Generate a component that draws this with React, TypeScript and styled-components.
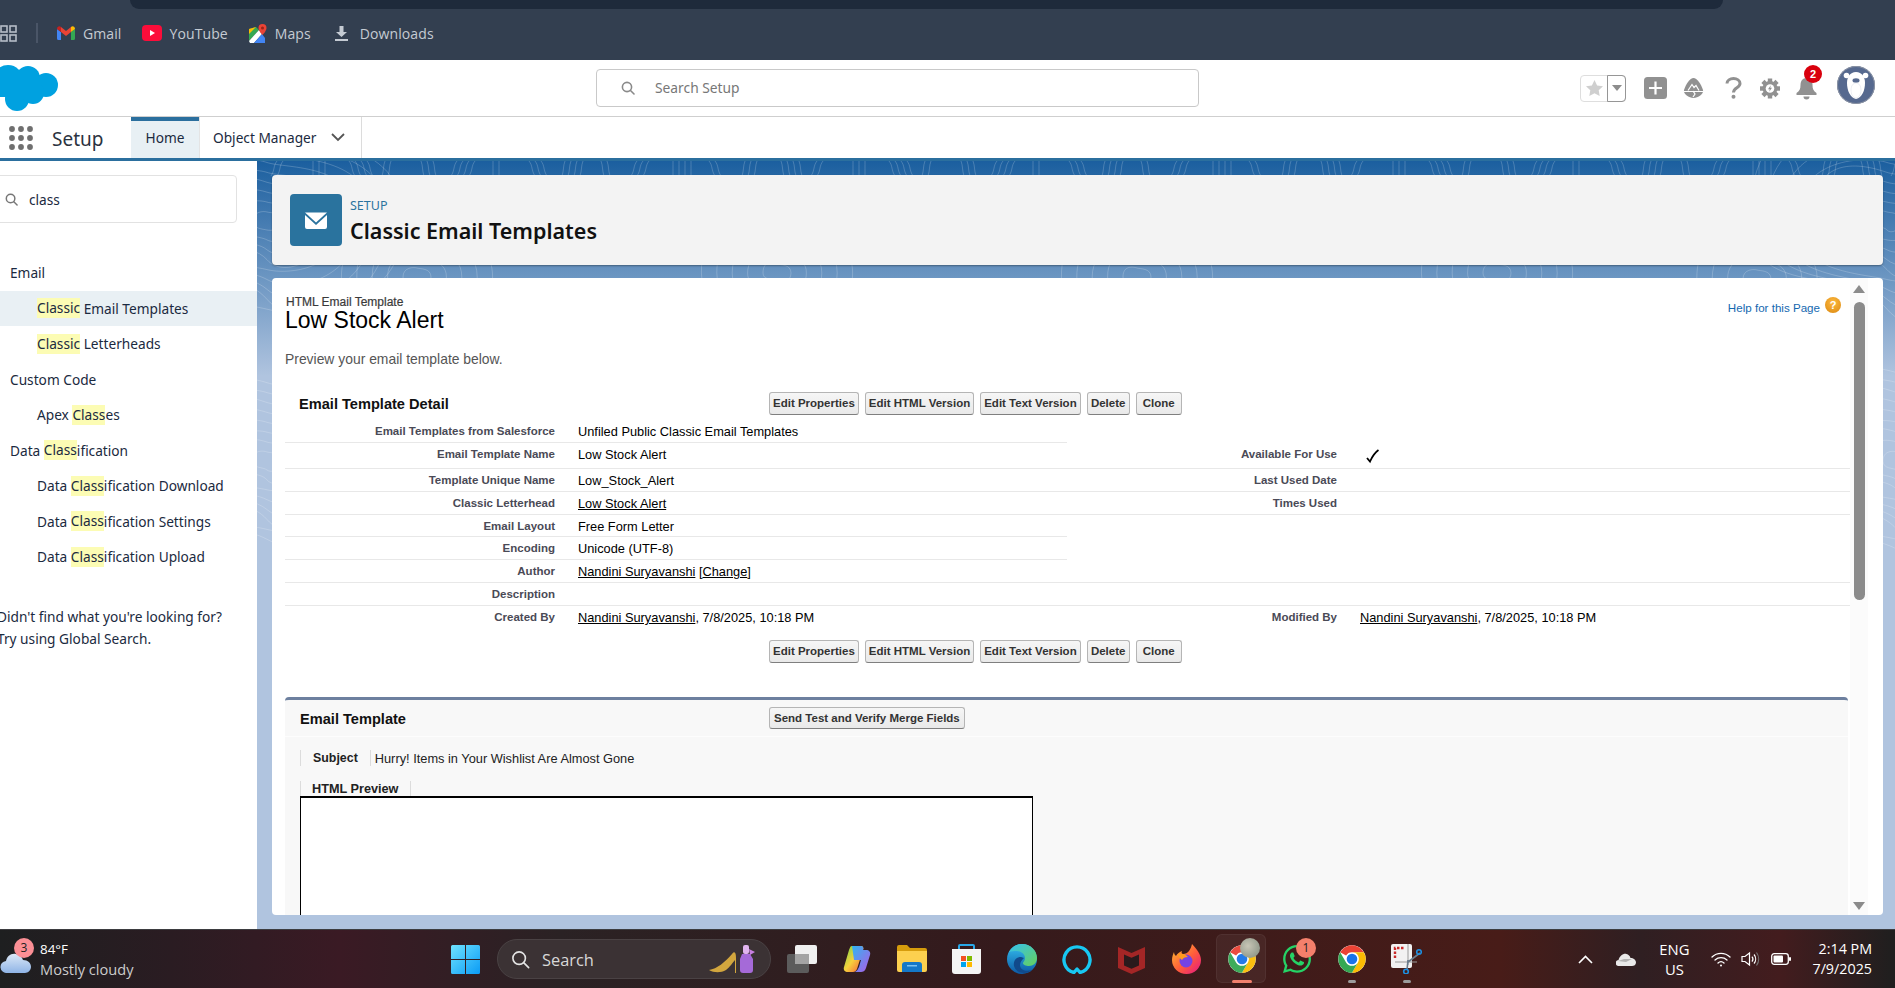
import React from "react";
import styled, { createGlobalStyle } from "styled-components";
import { FaWhatsapp } from "react-icons/fa";

const Global = createGlobalStyle`
  html, body { margin: 0; padding: 0; overflow: hidden; background: #fff; }
  * { box-sizing: border-box; }
`;

const UI = `"Noto Sans", "Open Sans", sans-serif`;
const WIN = `"Open Sans", "Noto Sans", sans-serif`;
const CLASSIC = `"Liberation Sans", Arial, sans-serif`;

const Page = styled.div`
  width: 1895px;
  height: 988px;
  display: flex;
  flex-direction: column;
  overflow: hidden;
  font-family: ${UI};
`;

/* browser bookmarks */
const BrowserBar = styled.div`
  height: 60px;
  flex: none;
  background: #333f50;
`;
const AddressSliver = styled.div`
  height: 9px;
  margin: 0 172px 0 130px;
  background: #1e2a3b;
  border-radius: 0 0 14px 14px;
`;
const BookmarkRow = styled.div`
  display: flex;
  align-items: center;
  height: 50px;
  padding-bottom: 2px;
`;
const Divider = styled.span`
  width: 2px;
  height: 20px;
  margin: 0 19px 0 19px;
  background: #4a5567;
`;
const Bookmark = styled.div<{ $gap: number; $ml: number }>`
  display: flex;
  align-items: center;
  gap: ${(p) => p.$gap}px;
  margin-left: ${(p) => p.$ml}px;
  color: #c5cbd3;
  font-family: ${WIN};
  font-size: 14px;
  letter-spacing: 0.1px;
`;

/* salesforce header */
const GlobalHeader = styled.header`
  height: 57px;
  flex: none;
  display: flex;
  align-items: center;
  background: #fff;
  border-bottom: 1px solid #cfcfcf;
`;
const Logo = styled.svg`
  width: 58px;
  height: 46px;
  flex: none;
  margin-top: -1px;
`;
const GlobalSearch = styled.div`
  width: 603px;
  height: 38px;
  margin-left: 538px;
  margin-top: -1px;
  flex: none;
  display: flex;
  align-items: center;
  gap: 20px;
  padding-left: 24px;
  border: 1px solid #c9c9c9;
  border-radius: 4px;
  color: #777;
  font-size: 13.8px;
`;
const Actions = styled.div`
  display: flex;
  align-items: center;
  margin-left: 381px;
`;
const StarGroup = styled.div`
  width: 46px;
  height: 27px;
  display: flex;
  border: 1px solid #dedede;
  border-radius: 4px;
`;
const StarCell = styled.div`
  width: 26px;
  display: flex;
  align-items: center;
  justify-content: center;
`;
const CaretCell = styled.div`
  flex: 1;
  margin: -1px -1px -1px 0;
  display: flex;
  align-items: center;
  justify-content: center;
  border: 1px solid #969696;
  border-radius: 0 4px 4px 0;
`;
const ActionSlot = styled.div<{ $ml: number; $w: number }>`
  position: relative;
  width: ${(p) => p.$w}px;
  margin-left: ${(p) => p.$ml}px;
  display: flex;
  align-items: center;
  justify-content: center;
`;
const Badge = styled.span`
  position: absolute;
  top: -12px;
  right: -5px;
  width: 18px;
  height: 18px;
  border-radius: 50%;
  background: #d9000d;
  color: #fff;
  font: bold 11px/18px ${CLASSIC};
  text-align: center;
`;
const AvatarWrap = styled.div`
  margin-left: 20px;
  margin-top: -6px;
  width: 38px;
  height: 38px;
`;

/* app nav */
const NavBar = styled.nav`
  height: 44px;
  flex: none;
  display: flex;
  background: #fff;
  border-bottom: 3px solid #2b6f9e;
`;
const AppLauncher = styled.div`
  width: 131px;
  flex: none;
  display: flex;
  align-items: center;
  padding-left: 9px;
  gap: 19px;
`;
const AppName = styled.span`
  font-size: 19px;
  color: #2b3340;
  margin-top: 2px;
`;
const HomeTab = styled.div`
  width: 68px;
  display: flex;
  align-items: center;
  justify-content: center;
  background: #e8f0f4;
  border-top: 4px solid #2b6f9e;
  font-size: 13.7px;
  color: #1b2a40;
  padding-bottom: 4px;
`;
const ObjectTab = styled.div`
  width: 163px;
  display: flex;
  align-items: center;
  gap: 15px;
  padding: 0 0 1px 13px;
  font-size: 13.7px;
  color: #1b2a40;
  border-right: 1px solid #dcdcdc;
  border-left: 1px solid #e4e4e4;
`;

/* body */
const Body = styled.div`
  flex: 1;
  display: flex;
  min-height: 0;
`;
const Sidebar = styled.aside`
  width: 257px;
  flex: none;
  background: #fff;
  overflow: hidden;
  font-size: 13.7px;
  color: #1b2a40;
`;
const SideSearch = styled.div`
  margin: 14px 20px 0 -10px;
  height: 48px;
  display: flex;
  align-items: center;
  gap: 11px;
  padding-left: 14px;
  border: 1px solid #e2e2e2;
  border-radius: 4px;
`;
const SideList = styled.div`
  margin-top: 32px;
`;
const SideRow = styled.div<{ $child?: boolean; $active?: boolean }>`
  height: 35.5px;
  display: flex;
  align-items: center;
  padding-left: ${(p) => (p.$child ? 37 : 10)}px;
  background: ${(p) => (p.$active ? "#e9f0f4" : "transparent")};
  white-space: pre;
`;
const Hit = styled.span`
  display: inline-block;
  background: #fcfcb4;
  line-height: 20px;
`;
const SideHint = styled.p`
  margin: 31px 0 0 -3px;
  line-height: 22px;
  white-space: nowrap;
`;

const Workspace = styled.main`
  position: relative;
  flex: 1;
  min-width: 0;
  display: flex;
  flex-direction: column;
  gap: 13px;
  padding: 14px 12px 14px 15px;
  overflow: hidden;
  background: linear-gradient(#1b5f9f 0, #b0c4df 215px);
`;
const Contours = styled.svg`
  position: absolute;
  inset: 0;
  width: 100%;
  height: 100%;
  pointer-events: none;
`;
const TitleCard = styled.section`
  position: relative;
  height: 90px;
  flex: none;
  display: flex;
  align-items: center;
  gap: 8px;
  padding-left: 18px;
  background: #f3f3f3;
  border-radius: 4px;
  box-shadow: 0 1px 2px rgba(0, 0, 0, 0.35);
`;
const TitleIcon = styled.div`
  width: 52px;
  height: 52px;
  display: flex;
  align-items: center;
  justify-content: center;
  border-radius: 4px;
  background: #2a739e;
`;
const TitleText = styled.div`
  padding-top: 2px;
`;
const Crumb = styled.div`
  font-size: 12.5px;
  line-height: 17px;
  color: #2a739e;
`;
const CardTitle = styled.h1`
  margin: 2px 0 0;
  font-size: 21.5px;
  font-weight: 600;
  line-height: 30px;
  color: #111;
  white-space: nowrap;
`;
const DetailCard = styled.section`
  position: relative;
  flex: 1;
  min-height: 0;
  display: flex;
  background: #fff;
  border-radius: 4px;
  overflow: hidden;
  font-family: ${CLASSIC};
`;
const Content = styled.div`
  flex: 1;
  min-width: 0;
  position: relative;
`;
const PageHead = styled.div`
  padding: 17px 0 0 14px;
`;
const PageKind = styled.div`
  font-size: 12px;
  line-height: 14px;
  color: #3a3a3a;
  -webkit-text-stroke: 0.2px #3a3a3a;
`;
const PageName = styled.h2`
  margin: 0 0 0 -1px;
  font-size: 23px;
  font-weight: normal;
  line-height: 22px;
  color: #000;
`;
const Intro = styled.p`
  margin: 20px 0 0 -1px;
  font-size: 13.9px;
  line-height: 16px;
  color: #555;
`;
const HelpLink = styled.div`
  position: absolute;
  top: 23px;
  right: 9px;
  display: flex;
  align-items: flex-start;
  gap: 5px;
  font-size: 11.6px;
  line-height: 14px;
  color: #1468b0;
`;
const HelpDot = styled.span`
  width: 16px;
  height: 16px;
  margin-top: -4px;
  border-radius: 50%;
  background: radial-gradient(circle at 50% 35%, #fdb93f, #db8810);
  color: #fff;
  font: bold 11px/16px ${CLASSIC};
  text-align: center;
`;
const DetailBar = styled.div<{ $mt: number }>`
  display: flex;
  align-items: flex-start;
  height: 23px;
  margin: ${(p) => p.$mt}px 0 0 13px;
`;
const SectionName = styled.h3<{ $w: number; $pl?: number }>`
  width: ${(p) => p.$w}px;
  flex: none;
  margin: 0;
  padding: 4px 0 0 ${(p) => p.$pl ?? 0}px;
  font-size: 14.6px;
  line-height: 17px;
  font-weight: bold;
  color: #111;
`;
const ButtonRow = styled.div`
  display: flex;
  gap: 6px;
`;
const Btn = styled.button<{ $minW?: number }>`
  height: 23px;
  min-width: ${(p) => p.$minW ?? 0}px;
  padding: 0 3px 1px;
  font: bold 11.5px/19px ${CLASSIC};
  color: #333;
  background: linear-gradient(#f6f6f6, #e9e9e9);
  border: 1px solid #b5b5b5;
  border-bottom-color: #7f7f7f;
  border-radius: 3px;
  white-space: nowrap;
`;
const FieldGrid = styled.div`
  display: grid;
  grid-template-columns: 270px 512px 270px 1fr;
  margin: 5px 0 0 13px;
  font-size: 12.8px;
  line-height: 14px;
`;
const Cell = styled.div<{ $h: number; $line: boolean }>`
  height: ${(p) => p.$h}px;
  border-bottom: ${(p) => (p.$line ? "1px solid #e8e8e8" : "none")};
`;
const LabelCell = styled(Cell)`
  padding-top: 4px;
  text-align: right;
  color: #4a4a56;
  font-size: 11.5px;
  font-weight: bold;
  white-space: nowrap;
`;
const ValueCell = styled(Cell)`
  padding: 5px 0 0 23px;
  color: #000;
  white-space: nowrap;
`;
const RecordLink = styled.span`
  text-decoration: underline;
`;
const CheckMark = styled.svg`
  display: block;
  margin: 1px 0 0 6px;
`;
const TemplateSection = styled.section`
  margin: 34px 2px 0 13px;
  height: 300px;
  border-top: 3px solid #6d809f;
  border-radius: 4px 4px 0 0;
  background: #f8f8f8;
`;
const TemplateHead = styled.div`
  display: flex;
  align-items: flex-start;
  height: 37px;
  padding: 7px 0 0 15px;
  border-bottom: 1px solid #fdfdfd;
`;
const SendBtn = styled(Btn)`
  height: 22px;
  padding: 0 4px 1px;
  line-height: 18px;
`;
const SubjectRow = styled.div`
  display: flex;
  align-items: center;
  height: 14px;
  margin: 14px 0 0 15px;
  font-size: 12.8px;
`;
const SubjectName = styled.strong`
  padding: 0 12px 0 12px;
  font-size: 12.4px;
  border-left: 1px solid #dcdcdc;
  border-right: 1px solid #dcdcdc;
  color: #222;
  line-height: 16px;
`;
const SubjectValue = styled.span`
  padding-left: 4px;
  color: #222;
`;
const PreviewTab = styled.div`
  display: inline-block;
  margin: 16px 0 0 15px;
  padding: 1px 11px 0;
  height: 15px;
  border-left: 1px solid #dcdcdc;
  border-right: 1px solid #dcdcdc;
  font-size: 12.7px;
  line-height: 14px;
  font-weight: bold;
  color: #222;
  vertical-align: top;
`;
const PreviewFrame = styled.div`
  width: 733px;
  height: 200px;
  margin-left: 15px;
  background: #fff;
  border: 1px solid #000;
  border-top-width: 2px;
`;
const ScrollRail = styled.div`
  position: relative;
  width: 18px;
  margin-right: 15px;
  flex: none;
  background: #fbfbfb;
  display: flex;
  flex-direction: column;
  align-items: center;
`;
const ScrollUp = styled.span`
  margin-top: 7px;
  width: 0;
  height: 0;
  border: 6px solid transparent;
  border-top: 0;
  border-bottom: 8px solid #8b8b8b;
`;
const ScrollThumb = styled.span`
  margin-top: 9px;
  width: 11px;
  height: 298px;
  border-radius: 6px;
  background: #8b8b8b;
`;
const ScrollDown = styled.span`
  margin-top: auto;
  margin-bottom: 5px;
  width: 0;
  height: 0;
  border: 6px solid transparent;
  border-bottom: 0;
  border-top: 8px solid #8b8b8b;
`;

/* windows taskbar */
const Taskbar = styled.footer`
  height: 59px;
  flex: none;
  display: flex;
  align-items: stretch;
  font-family: ${WIN};
  color: #fff;
  border-top: 1px solid #3d3d40;
  background: linear-gradient(90deg, #1e1f20 0, #2a1c22 170px, #3a1a24 340px, #2a2224 560px, #351a1c 1000px, #481c18 1500px, #2f1f22 1640px, #431c1e 1780px, #1f1f1f 1895px);
`;
const Weather = styled.div`
  position: relative;
  width: 451px;
  flex: none;
  display: flex;
  align-items: center;
  gap: 9px;
`;
const WeatherBadge = styled.span`
  position: absolute;
  left: 14px;
  top: 8px;
  width: 20px;
  height: 20px;
  border-radius: 50%;
  background: #fb8f95;
  color: #222;
  font-size: 12px;
  line-height: 20px;
  text-align: center;
`;
const WeatherText = styled.div`
  line-height: 20px;
  font-size: 13.4px;
`;
const WeatherSub = styled.div`
  color: #ccc;
  font-size: 14.6px;
`;
const StartBtn = styled.div`
  width: 46px;
  flex: none;
  display: flex;
  align-items: center;
`;
const SearchPill = styled.div`
  width: 274px;
  height: 40px;
  margin-top: 9px;
  flex: none;
  display: flex;
  align-items: center;
  gap: 12px;
  padding-left: 13px;
  border-radius: 20px;
  background: #3b3234;
  border: 1px solid #4a4244;
  color: #d8d8d8;
  font-size: 16.4px;
`;
const PillArt = styled.svg`
  margin-left: auto;
  margin-right: 13px;
`;
const AppSlots = styled.div`
  display: flex;
  margin-left: 3px;
`;
const AppSlot = styled.div<{ $active?: boolean }>`
  position: relative;
  width: 55px;
  display: flex;
  align-items: center;
  justify-content: center;
  padding-bottom: 1px;
  &::before {
    content: "";
    display: ${(p) => (p.$active ? "block" : "none")};
    position: absolute;
    left: 2px;
    right: 3px;
    top: 4px;
    bottom: 5px;
    border-radius: 6px;
    background: rgba(255, 255, 255, 0.05);
    border: 1px solid rgba(255, 255, 255, 0.05);
  }
`;
const RunDot = styled.span<{ $active?: boolean }>`
  position: absolute;
  left: 50%;
  bottom: 5px;
  width: ${(p) => (p.$active ? 20 : 8)}px;
  height: 3px;
  margin-left: ${(p) => (p.$active ? -10 : -4)}px;
  border-radius: 2px;
  background: ${(p) => (p.$active ? "#f2806e" : "#9c9c9c")};
`;
const AppBadge = styled.span`
  position: absolute;
  left: 27px;
  top: 8px;
  width: 20px;
  height: 20px;
  border-radius: 50%;
  background: #f4806c;
  color: #222;
  font-size: 12px;
  line-height: 20px;
  text-align: center;
`;
const Overlay = styled.span`
  position: absolute;
  left: 26px;
  top: 8px;
  width: 20px;
  height: 20px;
  border-radius: 50%;
  background: radial-gradient(circle at 40% 40%, #c8c6b6, #7f8a7c);
`;
const Tray = styled.div`
  margin-left: auto;
  display: flex;
  align-items: center;
  padding-right: 23px;
`;
const TraySlot = styled.div<{ $ml: number }>`
  margin-left: ${(p) => p.$ml}px;
  display: flex;
  align-items: center;
`;
const TwoLine = styled.div<{ $right?: boolean }>`
  text-align: ${(p) => (p.$right ? "right" : "center")};
  font-size: ${(p) => (p.$right ? 14.3 : 14.8)}px;
  line-height: 20px;
  white-space: nowrap;
`;

/* icons */
const GmailIcon = () => (
  <svg width="18" height="14" viewBox="0 0 18 14">
    <path d="M0 3v9.500A1.500 1.500 0 0 0 1.500 14H4V6z" fill="#4285f4" />
    <path d="M18 3v9.500a1.500 1.500 0 0 1-1.500 1.500H14V6z" fill="#34a853" />
    <path d="M4 6V1L9 5l5-4v5L9 10z" fill="#ea4335" />
    <path d="M0 3c0-2.500 2.600-3.600 4-2v5z" fill="#c5221f" />
    <path d="M18 3c0-2.500-2.600-3.600-4-2v5z" fill="#fbbc04" />
  </svg>
);
const YoutubeIcon = () => (
  <svg width="20" height="16" viewBox="0 0 20 16">
    <rect width="20" height="16" y="0" rx="4" fill="#fc0d3a" />
    <path d="M8 5l5 3-5 3z" fill="#fff" />
  </svg>
);
const MapsIcon = () => (
  <svg width="18" height="19" viewBox="0 0 18 19">
    <path d="M0 5l7-2 3 3-10 11z" fill="#34a853" />
    <path d="M0 17L10 6l3 4-8 9H1z" fill="#fff" />
    <path d="M5 19l8-9 3 4v5z" fill="#4285f4" />
    <path d="M0 5v5l7-7z" fill="#fbbc04" />
    <path d="M13.500 0a4 4 0 0 0-4 4c0 3 4 7 4 7s4-4 4-7a4 4 0 0 0-4-4z" fill="#ea4335" />
    <circle cx="13.500" cy="4" r="1.500" fill="#9d2418" />
  </svg>
);
const DownloadIcon = () => (
  <svg width="13" height="15" viewBox="0 0 13 15">
    <path d="M4.500 0h4v6H12L6.500 11 1 6h3.500z" fill="#c5cbd3" />
    <rect y="13" width="13" height="2" fill="#c5cbd3" />
  </svg>
);
const AppsIcon = () => (
  <svg width="17" height="17" viewBox="0 0 17 17" fill="none" stroke="#b6bdc7" strokeWidth="1.600">
    <rect x="1" y="1" width="6" height="6" />
    <rect x="10" y="1" width="6" height="6" />
    <rect x="1" y="10" width="6" height="6" />
    <rect x="10" y="10" width="6" height="6" />
  </svg>
);
const SearchGlyph = ({ size, color, width = 1.6 }: { size: number; color: string; width?: number }) => (
  <svg width={size} height={size} viewBox="0 0 14 14" fill="none" stroke={color} strokeWidth={width} strokeLinecap="round">
    <circle cx="6" cy="6" r="4.600" />
    <path d="M9.500 9.500L13 13" />
  </svg>
);
const CloudLogo = () => (
  <Logo viewBox="0 0 58 46">
    <g fill="#00a1e0">
      <circle cx="8" cy="15" r="15" />
      <circle cx="28" cy="13" r="12" />
      <circle cx="46" cy="20" r="12" />
      <circle cx="17" cy="34" r="12" />
      <circle cx="33" cy="28" r="11" />
      <rect x="0" y="10" width="40" height="22" />
    </g>
  </Logo>
);
const Star = () => (
  <svg width="17" height="16" viewBox="0 0 17 16">
    <path d="M8.500 0l2.600 5.400 5.900.8-4.300 4.100 1 5.700-5.200-2.800L3.300 16l1-5.700L0 6.200l5.900-.8z" fill="#cfcfcf" />
  </svg>
);
const Caret = () => (
  <svg width="10" height="6" viewBox="0 0 10 6"><path d="M0 0h10L5 6z" fill="#8d8d8d" /></svg>
);
const PlusIcon = () => (
  <svg width="23" height="22" viewBox="0 0 23 22">
    <rect width="23" height="22" rx="3.500" fill="#919191" />
    <path d="M11.500 4.500v13M5 11h13" stroke="#fff" strokeWidth="2.200" />
  </svg>
);
const TrailIcon = () => (
  <svg width="21" height="21" viewBox="0 0 21 21">
    <path d="M10.500 0C14 0 18 6 20 12c1 4-5 8-9.500 8S0 16 1 12C3 6 7 0 10.500 0z" fill="#919191" />
    <path d="M1 13.500h19M5 12.500l4-6 2 3 2-2 3 5M10 13l2 3-2 3" fill="none" stroke="#fff" strokeWidth="1.200" />
  </svg>
);
const QuestionIcon = () => (
  <svg width="17" height="22" viewBox="0 0 17 22" fill="none">
    <path d="M2 6.500C2 3.500 5 1.500 8.500 1.500s6.500 2 6.500 5c0 4.500-6.500 4-6.500 9" stroke="#919191" strokeWidth="3" />
    <circle cx="8.500" cy="19.800" r="2" fill="#919191" />
  </svg>
);
const GearIcon = () => (
  <svg width="20" height="21" viewBox="0 0 20 20">
    {[0, 45, 90, 135, 180, 225, 270, 315].map((a) => (
      <rect key={a} x="7.800" y="0" width="4.400" height="5" fill="#919191" transform={`rotate(${a} 10 10)`} />
    ))}
    <circle cx="10" cy="10" r="7.500" fill="#919191" />
    <circle cx="10" cy="10" r="4.300" fill="#fff" />
    <path d="M10.800 6.800L8 10.800h1.800l-.6 2.400 2.800-4h-1.800z" fill="#919191" />
  </svg>
);
const BellIcon = () => (
  <svg width="21" height="23" viewBox="0 0 21 23">
    <path d="M10.500 1c-4 0-6 3-6 7 0 4-1 6-4 8v2h20v-2c-3-2-4-4-4-8 0-4-2-7-6-7z" fill="#919191" />
    <path d="M7.500 19.500h6a3 3 0 0 1-6 0z" fill="#919191" />
  </svg>
);
const BearAvatar = () => (
  <svg width="38" height="38" viewBox="0 0 38 38">
    <circle cx="19" cy="19" r="19" fill="#56698f" />
    <circle cx="19" cy="19" r="18.500" fill="none" stroke="#8d94a3" strokeWidth="1" />
    <circle cx="9.500" cy="9.500" r="2.800" fill="#fff" />
    <circle cx="28.500" cy="9.500" r="2.800" fill="#fff" />
    <path d="M19 6c-6 0-9 5-9 11 0 7 3 15 9 16 6-1 9-9 9-16 0-6-3-11-9-11z" fill="#fff" />
    <ellipse cx="19" cy="14.500" rx="3.500" ry="2.200" fill="#56698f" />
    <path d="M19 17c-3 0-5 3-5 7 0 4 2 8 5 8s5-4 5-8c0-4-2-7-5-7z" fill="#fff" stroke="#d8dde6" strokeWidth=".5" />
  </svg>
);
const Waffle = () => (
  <svg width="24" height="24" viewBox="0 0 24 24" fill="#6f6f6f">
    {[3, 12, 21].flatMap((y) => [3, 12, 21].map((x) => <circle key={`${x}-${y}`} cx={x} cy={y} r="2.900" />))}
  </svg>
);
const Chevron = () => (
  <svg width="14" height="9" viewBox="0 0 14 9" fill="none" stroke="#555" strokeWidth="1.800"><path d="M1 1l6 6 6-6" /></svg>
);
const Envelope = () => (
  <svg width="22" height="17" viewBox="0 0 22 17">
    <path d="M0 0h22L11 10z" fill="#fff" transform="translate(0 .5)" />
    <path d="M0 3l11 10L22 3v12a2 2 0 0 1-2 2H2a2 2 0 0 1-2-2z" fill="#fff" />
  </svg>
);
const ContourArt = () => {
  const blobs = [
    [10, 60, 9], [1630, 60, 9], [10, 300, 8], [1640, 300, 9],
    [160, 116, 5], [520, 112, 5], [880, 116, 5], [1240, 112, 5], [1500, 118, 4],
  ];
  const bundles = Array.from({ length: 46 }, (_, i) => {
    const x = 20 + i * 36;
    const lean = ((i * 7) % 5) - 2;
    const count = 2 + (i % 3);
    return Array.from({ length: count }, (_, j) => {
      const px = x + j * 6;
      return `M${px} 0C${px + lean * 2} 5 ${px + lean} 9 ${px + lean * 3} 15`;
    });
  }).flat();
  return (
    <Contours aria-hidden="true">
      <g fill="none" stroke="#fff" strokeOpacity=".2" strokeWidth="1">
        {bundles.map((d) => <path key={d} d={d} />)}
        {blobs.flatMap(([cx, cy, n], b) =>
          Array.from({ length: n }, (_, i) => {
            const r = 10 + i * 11;
            const k = 1 + ((b * 3 + i) % 4) * 0.12;
            return (
              <path
                key={`${b}-${i}`}
                d={`M${cx - r * 1.4} ${cy} C${cx - r * 1.4} ${cy - r * k} ${cx - r * 0.3} ${cy - r} ${cx} ${cy - r * 0.9}
                S${cx + r * 1.4} ${cy - r * 0.9} ${cx + r * 1.4} ${cy} S${cx + r * 0.4} ${cy + r * k} ${cx} ${cy + r * 0.9}
                S${cx - r * 1.4} ${cy + r * 0.8} ${cx - r * 1.4} ${cy}`}
              />
            );
          })
        )}
      </g>
    </Contours>
  );
};
const WeatherCloud = () => (
  <svg width="31" height="20" viewBox="0 0 31 20" style={{ flex: "none", marginTop: 8 }}>
    <defs>
      <linearGradient id="wc" x1="0" y1="0" x2="0" y2="1">
        <stop offset="0" stopColor="#dbe8f7" />
        <stop offset="1" stopColor="#8fb4e6" />
      </linearGradient>
    </defs>
    <path d="M7 20a6 6 0 0 1-1-12c1-5 5-8 10-7 4 1 6 3 7 6 5 0 8 3 8 7 0 3-3 6-6 6z" fill="url(#wc)" />
  </svg>
);
const WinLogo = () => (
  <svg width="29" height="29" viewBox="0 0 29 29">
    <defs>
      <linearGradient id="wl" x1="0" y1="0" x2="1" y2="1">
        <stop offset="0" stopColor="#6fe3ff" />
        <stop offset="1" stopColor="#0a9bf5" />
      </linearGradient>
    </defs>
    <path d="M0 1.500A1.500 1.500 0 0 1 1.500 0H14v14H0zM15 0h12.500A1.500 1.500 0 0 1 29 1.500V14H15zM0 15h14v14H1.500A1.500 1.500 0 0 1 0 27.500zM15 15h14v12.500a1.500 1.500 0 0 1-1.500 1.500H15z" fill="url(#wl)" />
  </svg>
);
const HeelArt = () => (
  <PillArt width="48" height="30" viewBox="0 0 48 30">
    <path d="M0 26c8-1 16-8 23-16 3-4 4 0 4 4v15h-1V16c-2 2-5 7-9 10-5 3-12 3-17 0z" fill="#d2a63e" />
    <path d="M33 10h8l3 5v11c0 2-1 3-3 3h-7c-2 0-3-1-3-3V15z" fill="#a56ad8" />
    <rect x="34" y="1" width="6" height="9" rx="2" fill="#e0b4ee" />
    <path d="M40 5l6 3-5 3z" fill="#c77fe0" />
  </PillArt>
);
const TaskView = () => (
  <svg width="30" height="28" viewBox="0 0 30 28">
    <rect x="0" y="9" width="22" height="19" rx="2" fill="#5c5c5c" />
    <rect x="8" y="0" width="22" height="19" rx="2" fill="#f0f0f0" />
    <rect x="8" y="9" width="14" height="10" fill="#a4a4a4" />
  </svg>
);
const Copilot = () => (
  <svg width="28" height="26" viewBox="0 0 28 26">
    <defs>
      <linearGradient id="cp1" x1="0" y1="0" x2="1" y2="1">
        <stop offset="0" stopColor="#2fb6f0" />
        <stop offset="1" stopColor="#b05ae8" />
      </linearGradient>
      <linearGradient id="cp2" x1="0" y1="0" x2="1" y2="1">
        <stop offset="0" stopColor="#6fd34a" />
        <stop offset=".5" stopColor="#f6d13c" />
        <stop offset="1" stopColor="#f4563a" />
      </linearGradient>
    </defs>
    <path d="M9 0h9c2 0 3 2 2 4l-6 19c-1 2-2 3-4 3H5C2 26 0 24 1 21L6 4c1-2 1-4 3-4z" fill="url(#cp2)" />
    <path d="M9 0h9c2 0 3 2 2 4h3c3 0 5 2 4 5l-4 13c-1 3-3 4-5 4h-6c2-1 3-3 4-5l2-7H11z" fill="url(#cp1)" />
  </svg>
);
const Folder = () => (
  <svg width="30" height="27" viewBox="0 0 30 27">
    <path d="M0 2a2 2 0 0 1 2-2h8l3 3h15a2 2 0 0 1 2 2v5H0z" fill="#d69c0c" />
    <path d="M0 6h30v19a2 2 0 0 1-2 2H2a2 2 0 0 1-2-2z" fill="#fcd04f" />
    <path d="M5 27v-7a3 3 0 0 1 3-3h14a3 3 0 0 1 3 3v7z" fill="#1478c8" />
    <rect x="10" y="20" width="10" height="1.500" fill="#79c1f2" />
  </svg>
);
const StoreIcon = () => (
  <svg width="29" height="30" viewBox="0 0 29 30">
    <path d="M7 6V2a1 1 0 0 1 1-1h13a1 1 0 0 1 1 1v4" fill="none" stroke="#29a8e8" strokeWidth="2" />
    <path d="M0 5h29v22a3 3 0 0 1-3 3H3a3 3 0 0 1-3-3z" fill="#f4f4f4" />
    <rect x="9" y="12" width="5" height="5" fill="#f25022" />
    <rect x="15" y="12" width="5" height="5" fill="#7fba00" />
    <rect x="9" y="18" width="5" height="5" fill="#00a4ef" />
    <rect x="15" y="18" width="5" height="5" fill="#ffb900" />
  </svg>
);
const EdgeIcon = () => (
  <svg width="30" height="30" viewBox="0 0 30 30">
    <defs>
      <linearGradient id="ed1" x1="0" y1="0" x2="0" y2="1">
        <stop offset="0" stopColor="#35c1f1" />
        <stop offset="1" stopColor="#0c59a4" />
      </linearGradient>
      <linearGradient id="ed2" x1="0" y1="0" x2="1" y2="1">
        <stop offset="0" stopColor="#35c1f1" />
        <stop offset="1" stopColor="#66d05a" />
      </linearGradient>
    </defs>
    <circle cx="15" cy="15" r="15" fill="url(#ed1)" />
    <path d="M2 8C5 2 10 0 15 0c9 0 15 7 15 14 0 5-4 8-8 8-3 0-6-1-6-3 0-1 2-2 2-5 0-4-4-7-8-7-3 0-6 0-8 1z" fill="url(#ed2)" />
    <path d="M14 13c-5 0-8 4-7 9 1 4 5 7 10 7 3 0 6-1 8-3-6 2-12 0-12-5 0-3 2-5 4-7z" fill="#114a8b" />
  </svg>
);
const AlexaIcon = () => (
  <svg width="30" height="30" viewBox="0 0 30 30">
    <path d="M12 28.500A13 13 0 1 1 18 28.500L15 25z" fill="none" stroke="#18c8f2" strokeWidth="3.400" strokeLinejoin="round" />
  </svg>
);
const McAfeeIcon = () => (
  <svg width="27" height="30" viewBox="0 0 27 30">
    <path d="M0 3l13.500 6L27 3v21l-13.500 6L0 24z" fill="#a42626" />
    <path d="M6 10.500l7.500 3.300 7.500-3.300v11l-7.500 3.300L6 21.500z" fill="#2a1a1c" />
  </svg>
);
const FirefoxIcon = () => (
  <svg width="29" height="30" viewBox="0 0 29 30">
    <defs>
      <linearGradient id="ff" x1="0" y1="0" x2="1" y2="1">
        <stop offset="0" stopColor="#ffc22e" />
        <stop offset=".55" stopColor="#ff5a3c" />
        <stop offset="1" stopColor="#e31587" />
      </linearGradient>
    </defs>
    <path d="M20 0c5 5 9 11 9 16a14.500 14 0 0 1-29 0c0-3 1-6 2-8 0 2 1 3 2 4 1-2 3-4 6-5-1 2 0 3 1 3 5 0 8-5 9-10z" fill="url(#ff)" />
    <circle cx="14" cy="17" r="6.500" fill="#7543e3" />
    <path d="M6 10c4-1 8 0 10 3-3 0-5 1-6 3-2-2-4-3-4-6z" fill="#ff9a1f" />
  </svg>
);
const ChromeIcon = () => (
  <svg width="30" height="30" viewBox="0 0 48 48">
    <circle cx="24" cy="24" r="22" fill="#fff" />
    <path d="M5.050 13A22 22 0 0 1 42.950 13H24A11 11 0 0 0 14.500 18.500z" fill="#ea4335" />
    <path d="M42.950 13A22 22 0 0 1 24 46L33.500 29.500A11 11 0 0 0 24 13z" fill="#fbbc04" />
    <path d="M5.050 13L14.500 29.500A11 11 0 0 0 33.500 29.500L24 46A22 22 0 0 1 5.050 13z" fill="#34a853" />
    <circle cx="24" cy="24" r="8.500" fill="#1a73e8" />
  </svg>
);
const SnipIcon = () => (
  <svg width="31" height="30" viewBox="0 0 31 30">
    <rect x="0" y="0" width="21" height="24" rx="2" fill="#f2f2f2" />
    <path d="M4 14V4h10" fill="none" stroke="#c92a2a" strokeWidth="2.400" strokeDasharray="2.500 1.500" />
    <path d="M17 0v21M4 18h22" stroke="#9a9a9a" strokeWidth="1" />
    <path d="M17 18l12-9M17 16l-1 10" stroke="#6a7c8c" strokeWidth="1.600" />
    <circle cx="28" cy="8" r="2.300" fill="none" stroke="#1d8fe0" strokeWidth="1.600" />
    <circle cx="15" cy="27.500" r="2.300" fill="none" stroke="#1d8fe0" strokeWidth="1.600" />
  </svg>
);
const UpChevron = () => (
  <svg width="15" height="9" viewBox="0 0 15 9" fill="none" stroke="#fff" strokeWidth="1.600"><path d="M1 8l6.500-6.500L14 8" /></svg>
);
const OneDrive = () => (
  <svg width="20" height="13" viewBox="0 0 20 13">
    <path d="M3 13a3 3 0 0 1-.5-6c1-4 5-7 8-6 2 .5 3.500 2 4 4 3 0 5.500 2 5.500 4.500S18 13 16 13z" fill="#e9e9e9" />
    <path d="M2 8l6-2 8 0-6 3z" fill="#b3b3b3" />
  </svg>
);
const Wifi = () => (
  <svg width="20" height="15" viewBox="0 0 20 15" fill="none" stroke="#fff" strokeWidth="1.300" strokeLinecap="round">
    <path d="M1 5a13 13 0 0 1 18 0M4 8a9 9 0 0 1 12 0M7 11a4.500 4.500 0 0 1 6 0" />
    <circle cx="10" cy="13.500" r="1" fill="#fff" stroke="none" />
  </svg>
);
const Speaker = () => (
  <svg width="20" height="16" viewBox="0 0 20 16" fill="none" stroke="#fff" strokeWidth="1.200">
    <path d="M1 5.500h3L8.500 2v12L4 10.500H1z" />
    <path d="M11 5.500a4 4 0 0 1 0 5M13 3.500a7 7 0 0 1 0 9" />
    <path d="M15.500 1.500a11 11 0 0 1 0 13" stroke="#777" />
  </svg>
);
const Battery = () => (
  <svg width="20" height="12" viewBox="0 0 20 12">
    <rect x=".7" y=".7" width="16.600" height="10.600" rx="2.500" fill="none" stroke="#fff" strokeWidth="1.300" />
    <rect x="2.500" y="2.500" width="9.500" height="7" rx="1" fill="#fff" />
    <rect x="18" y="4" width="2" height="4" rx="1" fill="#fff" />
  </svg>
);

type Field = { label: string; value?: React.ReactNode; label2?: string; value2?: React.ReactNode; h: number; full: boolean };
const name = "Nandini Suryavanshi";
const fields: Field[] = [
  { label: "Email Templates from Salesforce", value: "Unfiled Public Classic Email Templates", h: 23, full: false },
  { label: "Email Template Name", value: "Low Stock Alert", label2: "Available For Use", value2: (
    <CheckMark width="13" height="15" viewBox="0 0 13 15"><path d="M1 9l3 3.500C6 8 9 3.500 12.500 1" fill="none" stroke="#000" strokeWidth="1.800" /></CheckMark>
  ), h: 26, full: true },
  { label: "Template Unique Name", value: "Low_Stock_Alert", label2: "Last Used Date", h: 23, full: true },
  { label: "Classic Letterhead", value: <RecordLink>Low Stock Alert</RecordLink>, label2: "Times Used", h: 23, full: true },
  { label: "Email Layout", value: "Free Form Letter", h: 22, full: false },
  { label: "Encoding", value: "Unicode (UTF-8)", h: 23, full: false },
  { label: "Author", value: <><RecordLink>{name}</RecordLink> [<RecordLink>Change</RecordLink>]</>, h: 23, full: true },
  { label: "Description", h: 23, full: true },
  { label: "Created By", value: <><RecordLink>{name}</RecordLink>, 7/8/2025, 10:18 PM</>, label2: "Modified By", value2: <><RecordLink>{name}</RecordLink>, 7/8/2025, 10:18 PM</>, h: 23, full: false },
];
const actions: { text: string; minW: number }[] = [
  { text: "Edit Properties", minW: 0 },
  { text: "Edit HTML Version", minW: 0 },
  { text: "Edit Text Version", minW: 0 },
  { text: "Delete", minW: 43 },
  { text: "Clone", minW: 46 },
];
const navItems: { child?: boolean; active?: boolean; parts: [string, string, string] }[] = [
  { parts: ["Email", "", ""] },
  { child: true, active: true, parts: ["", "Classic", " Email Templates"] },
  { child: true, parts: ["", "Classic", " Letterheads"] },
  { parts: ["Custom Code", "", ""] },
  { child: true, parts: ["Apex ", "Class", "es"] },
  { parts: ["Data ", "Class", "ification"] },
  { child: true, parts: ["Data ", "Class", "ification Download"] },
  { child: true, parts: ["Data ", "Class", "ification Settings"] },
  { child: true, parts: ["Data ", "Class", "ification Upload"] },
];

export default function App() {
  return (
    <Page>
      <Global />
      <BrowserBar>
        <AddressSliver />
        <BookmarkRow>
          <AppsIcon />
          <Divider />
          <Bookmark $gap={8} $ml={0}><GmailIcon />Gmail</Bookmark>
          <Bookmark $gap={8} $ml={20}><YoutubeIcon />YouTube</Bookmark>
          <Bookmark $gap={8} $ml={21}><MapsIcon />Maps</Bookmark>
          <Bookmark $gap={12} $ml={24}><DownloadIcon />Downloads</Bookmark>
        </BookmarkRow>
      </BrowserBar>

      <GlobalHeader>
        <CloudLogo />
        <GlobalSearch>
          <SearchGlyph size={14} color="#8a8a8a" />
          Search Setup
        </GlobalSearch>
        <Actions>
          <StarGroup>
            <StarCell><Star /></StarCell>
            <CaretCell><Caret /></CaretCell>
          </StarGroup>
          <ActionSlot $ml={18} $w={23}><PlusIcon /></ActionSlot>
          <ActionSlot $ml={16} $w={21}><TrailIcon /></ActionSlot>
          <ActionSlot $ml={21} $w={17}><QuestionIcon /></ActionSlot>
          <ActionSlot $ml={18} $w={20}><GearIcon /></ActionSlot>
          <ActionSlot $ml={16} $w={21}><BellIcon /><Badge>2</Badge></ActionSlot>
          <AvatarWrap><BearAvatar /></AvatarWrap>
        </Actions>
      </GlobalHeader>

      <NavBar>
        <AppLauncher>
          <Waffle />
          <AppName>Setup</AppName>
        </AppLauncher>
        <HomeTab>Home</HomeTab>
        <ObjectTab>Object Manager <Chevron /></ObjectTab>
      </NavBar>

      <Body>
        <Sidebar>
          <SideSearch>
            <SearchGlyph size={13} color="#777" />
            class
          </SideSearch>
          <SideList>
            {navItems.map((n) => (
              <SideRow key={n.parts.join("")} $child={n.child} $active={n.active}>
                {n.parts[0]}
                {n.parts[1] && <Hit>{n.parts[1]}</Hit>}
                {n.parts[2]}
              </SideRow>
            ))}
          </SideList>
          <SideHint>
            Didn't find what you're looking for?
            <br />
            Try using Global Search.
          </SideHint>
        </Sidebar>

        <Workspace>
          <ContourArt />
          <TitleCard>
            <TitleIcon><Envelope /></TitleIcon>
            <TitleText>
              <Crumb>SETUP</Crumb>
              <CardTitle>Classic Email Templates</CardTitle>
            </TitleText>
          </TitleCard>

          <DetailCard>
            <Content>
              <HelpLink>Help for this Page <HelpDot>?</HelpDot></HelpLink>
              <PageHead>
                <PageKind>HTML Email Template</PageKind>
                <PageName>Low Stock Alert</PageName>
                <Intro>Preview your email template below.</Intro>
              </PageHead>
              <DetailBar $mt={25}>
                <SectionName $w={484} $pl={14}>Email Template Detail</SectionName>
                <ButtonRow>{actions.map((a) => <Btn key={a.text} $minW={a.minW}>{a.text}</Btn>)}</ButtonRow>
              </DetailBar>
              <FieldGrid>
                {fields.map((f) => (
                  <React.Fragment key={f.label}>
                    <LabelCell $h={f.h} $line={f.label !== "Created By"}>{f.label}</LabelCell>
                    <ValueCell $h={f.h} $line={f.label !== "Created By"}>{f.value}</ValueCell>
                    <LabelCell $h={f.h} $line={f.full}>{f.label2}</LabelCell>
                    <ValueCell $h={f.h} $line={f.full}>{f.value2}</ValueCell>
                  </React.Fragment>
                ))}
              </FieldGrid>
              <DetailBar $mt={11}>
                <SectionName $w={484} />
                <ButtonRow>{actions.map((a) => <Btn key={a.text} $minW={a.minW}>{a.text}</Btn>)}</ButtonRow>
              </DetailBar>
              <TemplateSection>
                <TemplateHead>
                  <SectionName $w={469}>Email Template</SectionName>
                  <SendBtn>Send Test and Verify Merge Fields</SendBtn>
                </TemplateHead>
                <SubjectRow>
                  <SubjectName>Subject</SubjectName>
                  <SubjectValue>Hurry! Items in Your Wishlist Are Almost Gone</SubjectValue>
                </SubjectRow>
                <PreviewTab>HTML Preview</PreviewTab>
                <PreviewFrame />
              </TemplateSection>
            </Content>
            <ScrollRail>
              <ScrollUp />
              <ScrollThumb />
              <ScrollDown />
            </ScrollRail>
          </DetailCard>
        </Workspace>
      </Body>

      <Taskbar>
        <Weather>
          <WeatherCloud />
          <WeatherBadge>3</WeatherBadge>
          <WeatherText>
            84°F
            <WeatherSub>Mostly cloudy</WeatherSub>
          </WeatherText>
        </Weather>
        <StartBtn><WinLogo /></StartBtn>
        <SearchPill>
          <SearchGlyph size={19} color="#e4e4e4" width={1.2} />
          Search
          <HeelArt />
        </SearchPill>
        <AppSlots>
          <AppSlot><TaskView /></AppSlot>
          <AppSlot><Copilot /></AppSlot>
          <AppSlot><Folder /></AppSlot>
          <AppSlot><StoreIcon /></AppSlot>
          <AppSlot><EdgeIcon /></AppSlot>
          <AppSlot><AlexaIcon /></AppSlot>
          <AppSlot><McAfeeIcon /></AppSlot>
          <AppSlot><FirefoxIcon /></AppSlot>
          <AppSlot $active><ChromeIcon /><Overlay /><RunDot $active /></AppSlot>
          <AppSlot><FaWhatsapp size={32} color="#25d366" /><AppBadge>1</AppBadge></AppSlot>
          <AppSlot><ChromeIcon /><RunDot /></AppSlot>
          <AppSlot><SnipIcon /><RunDot /></AppSlot>
        </AppSlots>
        <Tray>
          <TraySlot $ml={0}><UpChevron /></TraySlot>
          <TraySlot $ml={23}><OneDrive /></TraySlot>
          <TraySlot $ml={23}><TwoLine>ENG<br />US</TwoLine></TraySlot>
          <TraySlot $ml={22}><Wifi /></TraySlot>
          <TraySlot $ml={10}><Speaker /></TraySlot>
          <TraySlot $ml={10}><Battery /></TraySlot>
          <TraySlot $ml={21}><TwoLine $right>2:14 PM<br />7/9/2025</TwoLine></TraySlot>
        </Tray>
      </Taskbar>
    </Page>
  );
}
